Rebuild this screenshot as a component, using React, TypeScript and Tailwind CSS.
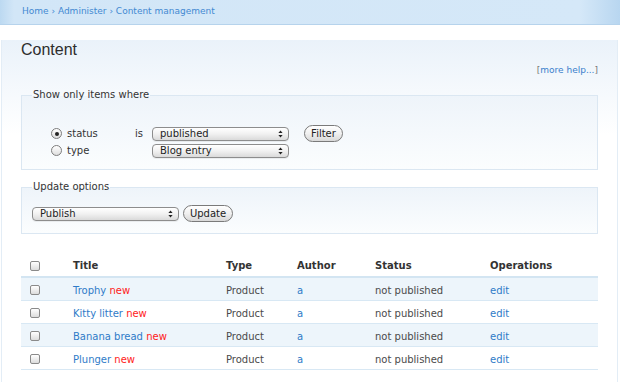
const rows = ["Trophy", "Kitty litter", "Banana bread", "Plunger"];

function Arrows() {
  return (
    <svg width="5" height="8" viewBox="0 0 5 8" className="shrink-0">
      <path d="M2.5 0.5 L4.6 3 L0.4 3 Z" fill="#222" />
      <path d="M2.5 7.5 L4.6 5 L0.4 5 Z" fill="#222" />
    </svg>
  );
}

function Select({ label, className }: { label: string; className: string }) {
  return (
    <div
      className={`flex h-[14px] items-center justify-between rounded-[4px] border border-[#8d8d8d] bg-[linear-gradient(to_bottom,#ffffff,#f1f1f1_50%,#dadada)] pl-[7px] pr-[5px] text-[10px] leading-none text-[#1e1e1e] shadow-[0_1px_0_rgba(0,0,0,0.06)] ${className}`}
    >
      <span>{label}</span>
      <Arrows />
    </div>
  );
}

function Button({ label, className }: { label: string; className: string }) {
  return (
    <div
      className={`flex h-[17px] items-center justify-center rounded-full border border-[#7a7a7a] bg-[linear-gradient(to_bottom,#ffffff,#f0f0f0_50%,#d8d8d8)] text-[10px] leading-none text-[#222] ${className}`}
    >
      {label}
    </div>
  );
}

function Radio({ checked }: { checked?: boolean }) {
  return (
    <div className="flex h-[11px] w-[11px] shrink-0 items-center justify-center rounded-full border border-[#7d7d7d] bg-[linear-gradient(to_bottom,#ffffff,#dedede)]">
      {checked && <div className="h-[4px] w-[4px] rounded-full bg-[#222]" />}
    </div>
  );
}

function Checkbox() {
  return (
    <div className="h-[10px] w-[10px] rounded-[2px] border border-[#8a8a8a] bg-[linear-gradient(to_bottom,#ffffff,#dcdcdc)]" />
  );
}

const cols = "grid grid-cols-[52px_153px_71px_78px_115px_108px] items-center";

export default function App() {
  return (
    <div
      className="h-[382px] w-[620px] overflow-hidden bg-white text-[10px] text-[#333]"
      style={{ fontFamily: '"DejaVu Sans", Verdana, sans-serif' }}
    >
      {/* Breadcrumb bar */}
      <div className="flex h-[25px] items-center border-b border-[#b6d3ec] bg-[linear-gradient(to_right,#bcd9f1,#d2e6f7_14px,#d5e8f8_calc(100%-40px),#b8d6f0)] pl-[22px] text-[9px] text-[#4389d2]">
        Home › Administer › Content management
      </div>

      {/* Main area */}
      <div className="ml-[1px] mr-[2px] h-[357px] border-x border-[#e3edf6] bg-[linear-gradient(to_bottom,#eaf2fa,#ffffff_95px)] px-[19px]">
        <h1
          className="mt-[15px] text-[16px] leading-[20px] text-[#2d2d2d]"
          style={{ fontFamily: '"Liberation Sans", Arial, sans-serif' }}
        >
          Content
        </h1>
        <div className="mt-[4px] text-right text-[9px] leading-[12px] text-[#777]">
          [<span className="text-[#3a80cc]">more help...</span>]
        </div>

        {/* Filter fieldset */}
        <fieldset className="mt-[13px] border border-[#dbe7f2] bg-[linear-gradient(to_bottom,#eef4fa,#fbfdfe)] px-0">
          <legend className="ml-[10px] px-[1px] text-[10px] leading-[12px] text-[#333]">
            Show only items where
          </legend>
          <div className="mt-[24px] pb-[10px] pl-[29px]">
            <div className="flex h-[17px] items-center">
              <div className="flex w-[84px] items-center gap-[5px]">
                <Radio checked />
                <span>status</span>
              </div>
              <span className="w-[17px]">is</span>
              <Select label="published" className="w-[137px]" />
              <Button label="Filter" className="ml-[15px] w-[39px]" />
            </div>
            <div className="flex h-[17px] items-center">
              <div className="flex w-[84px] items-center gap-[5px]">
                <Radio />
                <span>type</span>
              </div>
              <span className="w-[17px]" />
              <Select label="Blog entry" className="w-[137px]" />
            </div>
          </div>
        </fieldset>

        {/* Update fieldset */}
        <fieldset className="mt-[11px] border border-[#dbe7f2] bg-[linear-gradient(to_bottom,#eef4fa,#fbfdfe)] px-0">
          <legend className="ml-[10px] px-[1px] text-[10px] leading-[12px] text-[#333]">
            Update options
          </legend>
          <div className="mt-[12px] flex h-[17px] items-center pl-[10px]">
            <Select label="Publish" className="w-[147px]" />
            <Button label="Update" className="ml-[4px] w-[50px]" />
          </div>
          <div className="h-[11px]" />
        </fieldset>

        {/* Content table */}
        <div className="mt-[21px]">
          <div className={`${cols} h-[23px] border-b-2 border-[#d3e5f2] font-bold text-[#333]`}>
            <div className="pl-[9px]">
              <Checkbox />
            </div>
            <div>Title</div>
            <div>Type</div>
            <div>Author</div>
            <div>Status</div>
            <div>Operations</div>
          </div>
          {rows.map((title, i) => (
            <div
              key={title}
              className={`${cols} h-[23px] border-b border-[#d8e8f4] pt-[2px] ${i % 2 === 0 ? "bg-[#edf5fb]" : "bg-white"}`}
            >
              <div className="pl-[9px]">
                <Checkbox />
              </div>
              <div>
                <span className="text-[#2f7bc8]">{title}</span>{" "}
                <span className="text-[#ff1a1a]">new</span>
              </div>
              <div className="text-[#4a4a4a]">Product</div>
              <div className="text-[#2f7bc8]">a</div>
              <div className="text-[#4a4a4a]">not published</div>
              <div className="text-[#2f7bc8]">edit</div>
            </div>
          ))}
        </div>
      </div>
    </div>
  );
}
